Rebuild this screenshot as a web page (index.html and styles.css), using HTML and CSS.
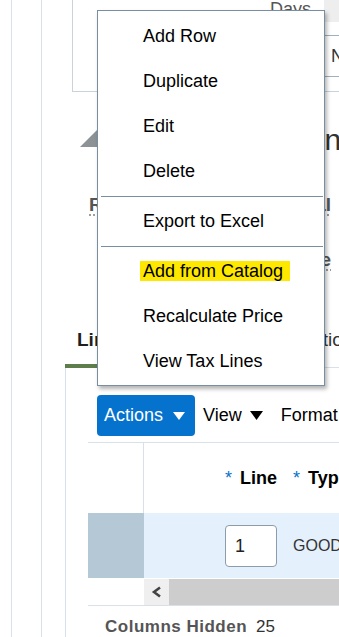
FILE: index.html
```html
<!DOCTYPE html>
<html lang="en">
<head>
<meta charset="utf-8">
<title>Lines</title>
<link rel="stylesheet" href="styles.css">
</head>
<body>
<div class="page">
  <div class="rail1">
    <div class="rail2">
      <div class="topbox">
        <div class="days-label">Days</div>
        <div class="days-field">
          <div class="days-head"></div>
          <div class="days-input">N</div>
        </div>
      </div>

      <div class="hdr">
        <svg class="disclose" width="20" height="20" viewBox="0 0 20 20"><polygon points="0,20 20,20 20,0" fill="#8d9297"/></svg>
        <h2 class="hdr-title">Line Information</h2>
      </div>

      <div class="form-row r1">
        <span class="lbl-left"><span class="lbl">Requisitioning BU</span></span>
        <span class="lbl-right"><span class="lbl">Total</span></span>
      </div>
      <div class="form-row r2">
        <span class="lbl-left"></span>
        <span class="lbl-right"><span class="lbl">Source</span></span>
      </div>

      <div class="tabs">
        <div class="tab active">Lines</div>
        <div class="tab second">Additional Information</div>
      </div>

      <div class="panel">
        <div class="toolbar">
          <div class="btn-actions">Actions
            <svg width="12" height="8" viewBox="0 0 12 8"><polygon points="0,0 12,0 6,8" fill="#ffffff"/></svg>
          </div>
          <div class="tb-item">View
            <svg width="13" height="9" viewBox="0 0 13 9"><polygon points="0,0 13,0 6.5,9" fill="#000000"/></svg>
          </div>
          <div class="tb-item format">Format</div>
        </div>

        <div class="grid">
          <div class="th-corner"></div>
          <div class="th-cols">
            <span class="col col-line"><span class="req">*</span> Line</span>
            <span class="col col-type"><span class="req">*</span> Type</span>
          </div>
          <div class="rowhead"></div>
          <div class="rowcells">
            <span class="col col-line"><span class="inp">1</span></span>
            <span class="col col-type goods">GOODS</span>
          </div>
          <div class="sb-spacer"></div>
          <div class="scrollbar">
            <span class="sb-btn">
              <svg width="12" height="12" viewBox="0 0 12 12"><polyline points="9,1.5 3,6 9,10.5" fill="none" stroke="#444444" stroke-width="2.6"/></svg>
            </span>
            <span class="sb-track"></span>
          </div>
        </div>

        <div class="footer"><span class="ch">Columns Hidden</span><span class="num">25</span></div>
      </div>
    </div>
  </div>

  <div class="menu">
    <div class="mi">Add Row</div>
    <div class="mi">Duplicate</div>
    <div class="mi">Edit</div>
    <div class="mi">Delete</div>
    <div class="msep"></div>
    <div class="mi">Export to Excel</div>
    <div class="msep"></div>
    <div class="mi"><span class="hl">Add from Catalog</span></div>
    <div class="mi">Recalculate Price</div>
    <div class="mi">View Tax Lines</div>
  </div>
</div>
</body>
</html>
```

FILE: styles.css
```css
* { box-sizing: border-box; }

html, body {
  margin: 0;
  padding: 0;
  background: #ffffff;
}

body {
  font-family: "Liberation Sans", Arial, sans-serif;
  color: #000000;
}

.page {
  position: relative;
  width: 339px;
  height: 637px;
  overflow: hidden;
  white-space: nowrap;
}

.rail1 {
  margin-left: 11px;
  height: 637px;
  border-left: 1px solid #d8e1e9;
}

.rail2 {
  margin-left: 29px;
  height: 100%;
  border-left: 1px solid #d8e1e9;
  display: flex;
  flex-direction: column;
}

/* top box */
.topbox {
  margin-left: 30px;
  height: 92px;
  flex: 0 0 92px;
  border-left: 1px solid #c9d3dc;
  border-bottom: 1px solid #c9d3dc;
  display: flex;
}

.days-label {
  margin-left: 197px;
  flex: 0 0 54px;
  min-width: 0;
  margin-top: -1px;
  font-size: 18px;
  line-height: 20px;
  color: #555555;
}

.days-field {
  flex: 1;
}

.days-head {
  height: 22px;
  background: #eeeeee;
}

.days-input {
  margin-top: 13px;
  height: 42px;
  border: 1px solid #9fb0bf;
  border-right: none;
  padding-left: 6px;
  font-size: 18px;
  line-height: 40px;
  color: #333333;
}

/* section header */
.hdr {
  margin-top: 31px;
  margin-left: 38px;
  display: flex;
  align-items: flex-start;
  height: 34px;
  flex: 0 0 34px;
}

.disclose {
  margin-top: 4px;
  flex: 0 0 20px;
}

.hdr-title {
  margin: 0 0 0 26px;
  font-size: 30px;
  line-height: 34px;
  font-weight: normal;
  color: #333333;
}

/* form labels */
.form-row {
  display: flex;
  margin-left: 47px;
  font-size: 19px;
  line-height: 24px;
  height: 24px;
  flex: 0 0 24px;
}

.r1 { margin-top: 36px; }
.r2 { margin-top: 31px; }

.lbl-left {
  flex: 0 0 150px;
  min-width: 0;
}

.lbl-right {
  flex: 0 0 92px;
  min-width: 0;
  text-align: right;
}

.lbl {
  font-weight: bold;
  color: #555555;
  text-decoration: underline dotted #9a9a9a;
  text-underline-offset: 4px;
}

/* tabs */
.tabs {
  margin-top: 56px;
  margin-left: 23px;
  display: flex;
  align-items: flex-end;
  border-bottom: 1px solid #d8e1e9;
  flex: 0 0 auto;
}

.tab {
  padding: 0 13px 12px 12px;
  font-size: 19px;
  line-height: 24px;
  color: #333333;
  border-bottom: 4px solid transparent;
  margin-bottom: -1px;
}

.tab.active {
  font-weight: bold;
  color: #1f1f1f;
  border-bottom-color: #5d7d4b;
}

.tab.second {
  margin-left: 18px;
}

/* panel */
.panel {
  margin-left: 23px;
  flex: 1;
  border-left: 1px solid #d8e1e9;
  padding-top: 27px;
}

.toolbar {
  margin-left: 31px;
  display: flex;
  align-items: center;
  height: 41px;
  font-size: 18px;
}

.btn-actions {
  display: flex;
  align-items: center;
  gap: 10px;
  height: 41px;
  padding: 0 10px 0 7px;
  background: #0572ce;
  color: #ffffff;
  border-radius: 4px;
}

.tb-item {
  display: flex;
  align-items: center;
  gap: 8px;
  margin-left: 8px;
  color: #000000;
}

.tb-item.format {
  margin-left: 18px;
}

/* table */
.grid {
  margin-top: 6px;
  margin-left: 22px;
  display: grid;
  grid-template-columns: 56px 1fr;
  grid-template-rows: 70px 65px 27px;
  border-top: 1px solid #d8e1e9;
  border-bottom: 1px solid #d8e1e9;
  overflow: hidden;
}

.th-corner {
  border-right: 1px solid #d8e1e9;
}

.th-cols,
.rowcells {
  display: flex;
  align-items: center;
  padding-left: 81px;
  overflow: hidden;
}

.th-cols {
  font-size: 18px;
  font-weight: bold;
  line-height: 70px;
}

.col-line {
  flex: 0 0 68px;
}

.col-type {
  flex: 0 0 auto;
}

.req {
  color: #0572ce;
  font-weight: normal;
  margin-right: 3px;
}

.rowhead {
  background: #b5c8d6;
}

.rowcells {
  background: #e4f0fc;
}

.inp {
  display: block;
  width: 52px;
  height: 42px;
  border: 1px solid #8c9cab;
  border-radius: 4px;
  background: #ffffff;
  padding-left: 9px;
  font-size: 18px;
  line-height: 40px;
  color: #222222;
}

.goods {
  font-size: 16px;
  color: #333333;
}

.sb-spacer {
  margin-top: 1px;
}

.scrollbar {
  margin-top: 1px;
  display: flex;
}

.sb-btn {
  flex: 0 0 25px;
  background: #efefef;
  display: flex;
  align-items: center;
  justify-content: center;
}

.sb-track {
  flex: 1;
  background: #cdcdcd;
}

.footer {
  margin-top: 11px;
  margin-left: 39px;
  font-size: 17px;
  line-height: 20px;
}

.ch {
  font-weight: bold;
  color: #555555;
  letter-spacing: 0.5px;
}

.num {
  margin-left: 9px;
  color: #333333;
}

/* popup menu */
.menu {
  position: absolute;
  left: 97px;
  top: 10px;
  width: 228px;
  border: 1px solid #7a8ea1;
  background: #ffffff;
  padding: 3px 0 1px;
  box-shadow: 2px 3px 4px rgba(0, 0, 0, 0.3);
}

.mi {
  height: 45px;
  line-height: 45px;
  padding-left: 45px;
  font-size: 18px;
  color: #000000;
}

.msep {
  height: 1px;
  background: #7a8ea1;
  margin: 2px 1px 2px 3px;
}

.hl {
  background: #ffe800;
  padding: 0 7px 0 3px;
  margin-left: -3px;
}
```
